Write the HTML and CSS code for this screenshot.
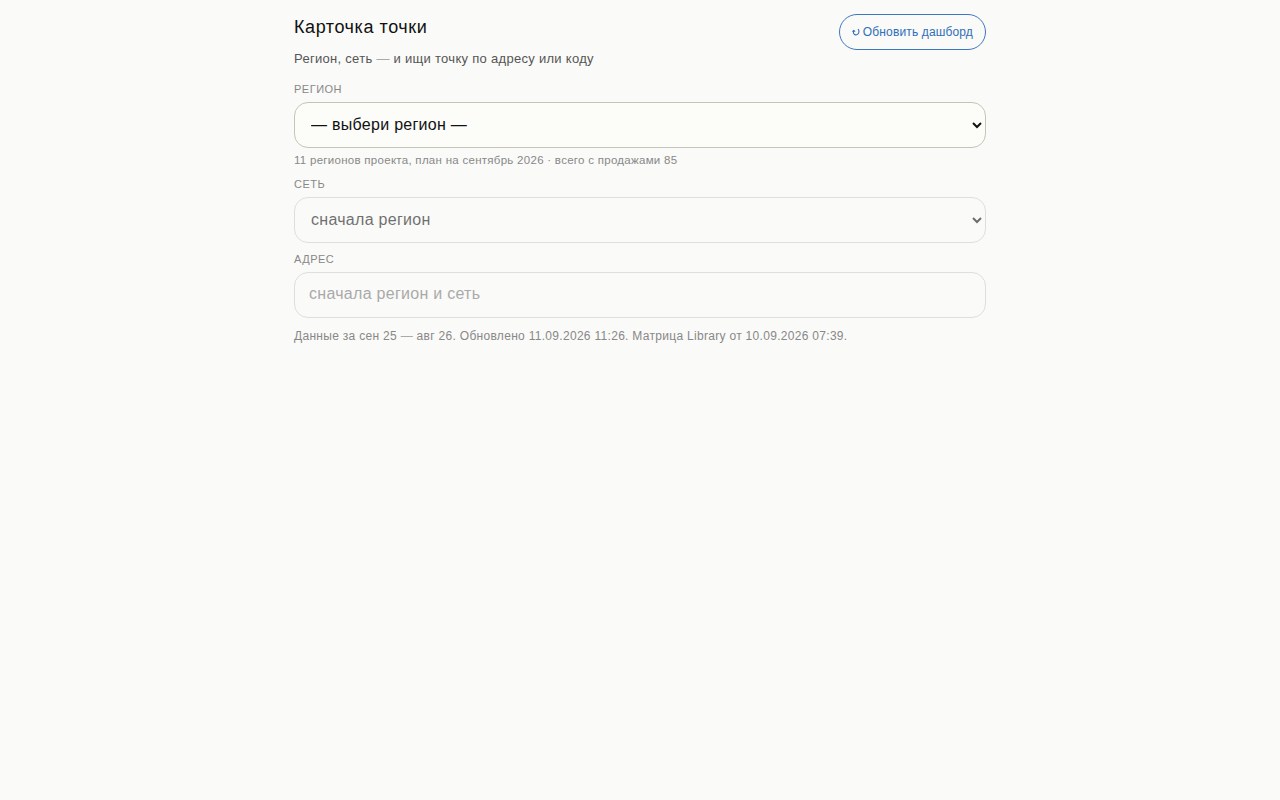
FILE: index.html
```html
<!DOCTYPE html>
<html lang="ru">
<head>
<meta charset="utf-8">
<title>Карточка точки</title>
<link rel="stylesheet" href="styles.css">
</head>
<body>
<main class="page">
  <header class="head">
    <div class="head-text">
      <h1 class="title">Карточка точки</h1>
      <p class="sub">Регион, сеть <span class="dash">—</span> и ищи точку по адресу или коду</p>
    </div>
    <button class="refresh" type="button"><svg class="refresh-icon" viewBox="0 0 8 8" aria-hidden="true"><path d="M6 1.2C7.4 2.6 7.2 5 5.8 6.2 4.5 7.3 2.6 7 1.8 5.7 1.3 4.9 1.3 3.8 1.7 2.9" /><path d="M.4 3.6 1.8 2.4 3.1 3.7" /></svg>Обновить дашборд</button>
  </header>
  <label class="label" for="region">Регион</label>
  <select class="field" id="region"><option>— выбери регион —</option></select>
  <p class="hint">11 регионов проекта, план на сентябрь 2026 · всего с продажами 85</p>
  <label class="label" for="net">Сеть</label>
  <select class="field" id="net" disabled><option>сначала регион</option></select>
  <label class="label label-addr" for="addr">Адрес</label>
  <input class="field" id="addr" type="text" placeholder="сначала регион и сеть" disabled>
  <p class="foot">Данные за сен 25 <span class="dash">—</span> авг 26. Обновлено 11.09.2026 11:26. Матрица Library от 10.09.2026 07:39.</p>
</main>
</body>
</html>
```
FILE: styles.css
```css
* { box-sizing: border-box; }
html, body { margin: 0; }
body {
  background: #fafaf8;
  color: #111;
  font-family: "Liberation Sans", Arial, sans-serif;
}
.page { width: 692px; margin: 0 auto; padding-top: 14px; }
.head { display: flex; justify-content: space-between; align-items: flex-start; }
.title { margin: 3px 0 0; font-size: 18px; font-weight: 400; line-height: 21px; letter-spacing: 0.57px; }
.sub { margin: 13px 0 0; font-size: 13px; line-height: 16px; letter-spacing: 0.29px; color: #555; }
.dash { color: #aaa; }
.refresh {
  display: flex; align-items: center; gap: 3px;
  height: 36px; padding: 0 12px;
  border: 1px solid #3a78c2; border-radius: 18px;
  background: transparent; color: #2f6fb8;
  font: 12px "Liberation Sans", Arial, sans-serif; letter-spacing: 0.14px;
}
.refresh-icon { width: 8px; height: 8px; fill: none; stroke: currentColor; stroke-width: 1.1; }
.label {
  display: block; margin-top: 9px;
  font-size: 11px; line-height: 16px; letter-spacing: 0.5px;
  text-transform: uppercase; color: #888;
}
.page > .head + .label { margin-top: 14px; }
.label-addr { margin-top: 8px; }
.field {
  display: block; width: 100%; height: 46px; margin-top: 5px;
  padding: 0 12px 1px;
  border: 1px solid #c4c4b8; border-radius: 14px;
  background: #fcfcf9; color: #111;
  font: 16px "Liberation Sans", Arial, sans-serif; letter-spacing: 0.28px;
}
.field:disabled { opacity: 0.6; background: #fafaf8; border-color: #ccc; }
input.field { padding: 0 14px 2px; }
.hint { margin: 5px 0 0; font-size: 11.5px; line-height: 14px; letter-spacing: 0.28px; color: #888; }
.foot { margin: 11px 0 0; font-size: 12px; line-height: 15px; letter-spacing: 0.3px; color: #888; }
```
